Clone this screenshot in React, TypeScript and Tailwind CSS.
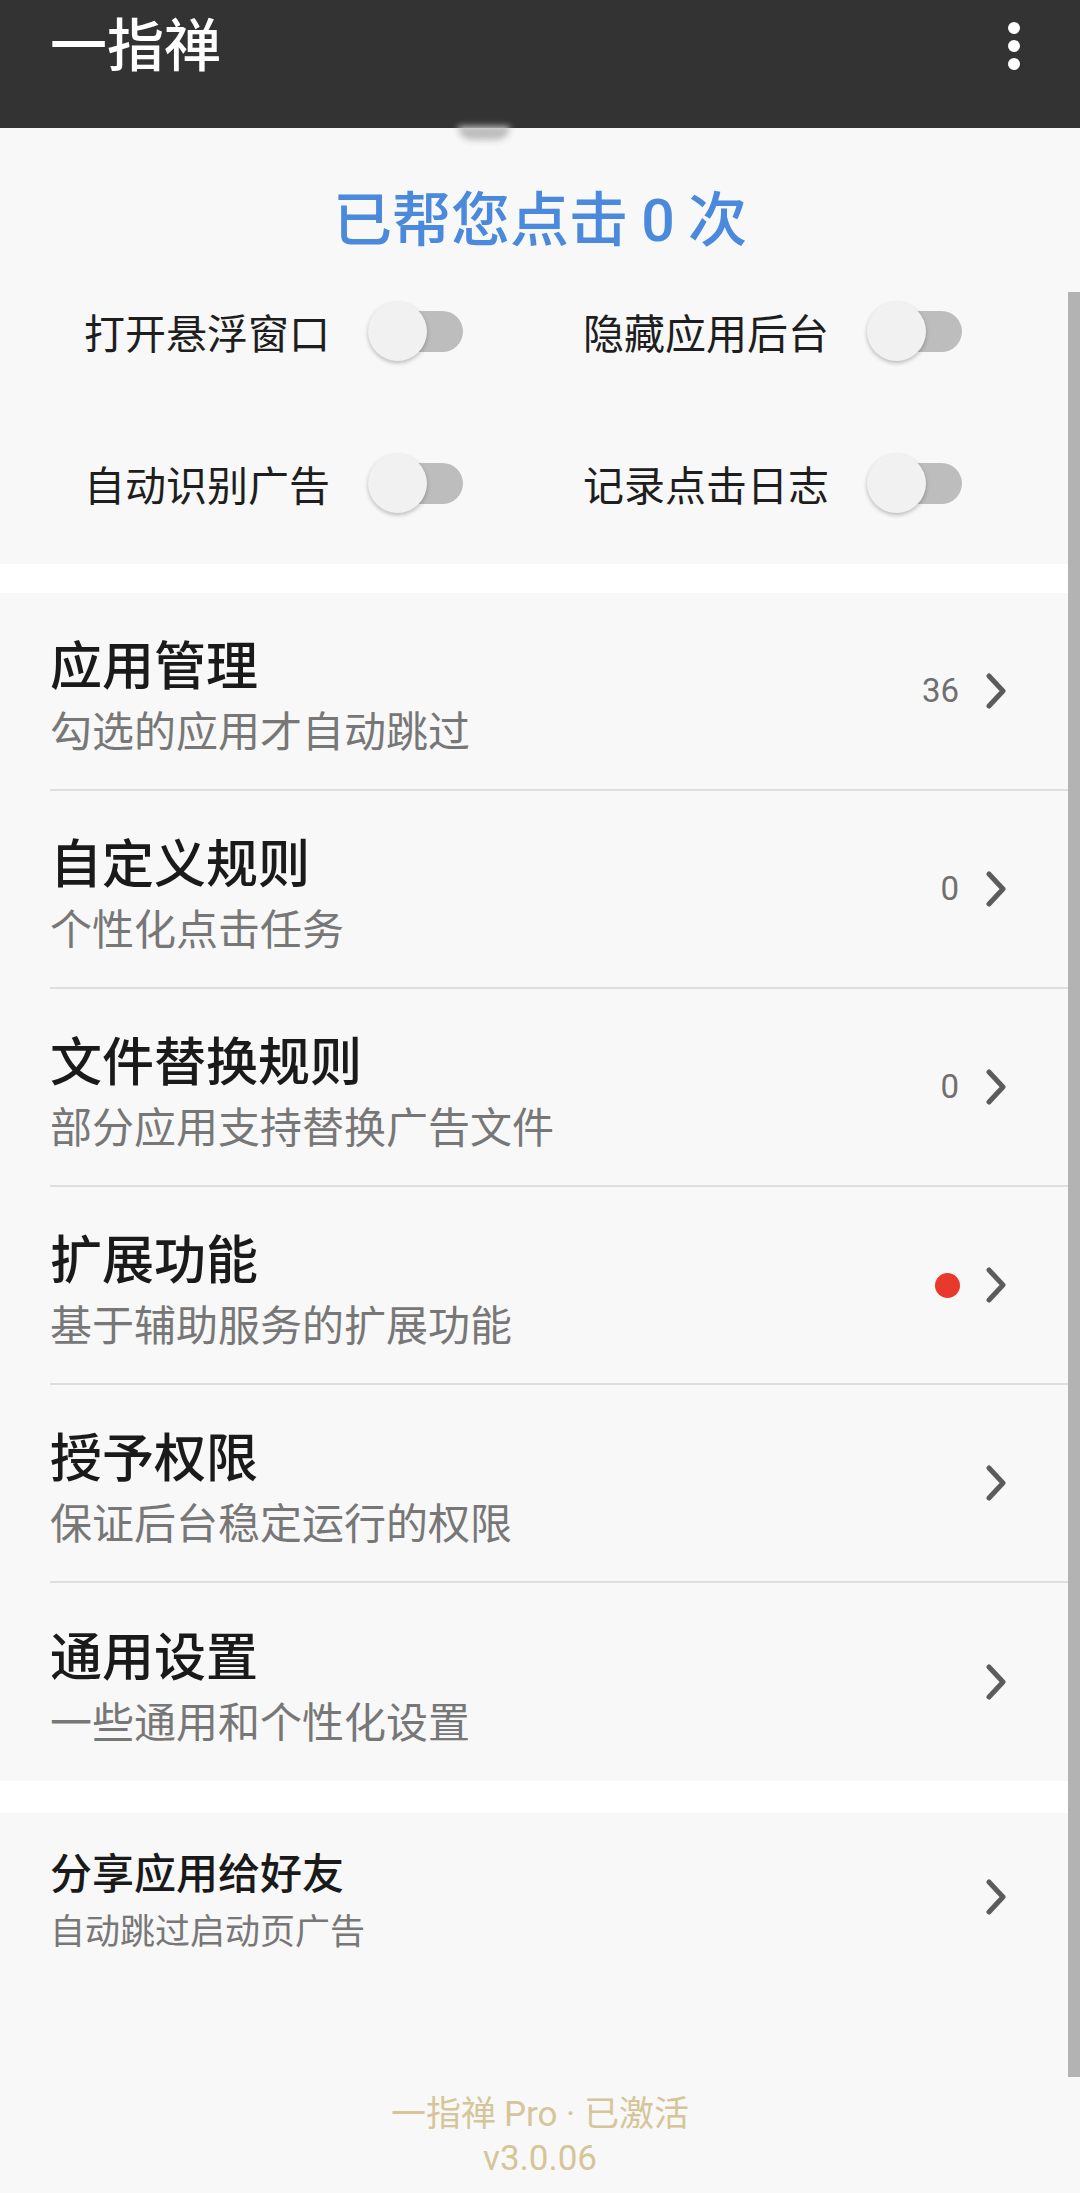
import React from "react";

type Item = {
  title: string;
  sub: string;
  count?: string;
  dot?: boolean;
};

const items: Item[] = [
  { title: "应用管理", sub: "勾选的应用才自动跳过", count: "36" },
  { title: "自定义规则", sub: "个性化点击任务", count: "0" },
  { title: "文件替换规则", sub: "部分应用支持替换广告文件", count: "0" },
  { title: "扩展功能", sub: "基于辅助服务的扩展功能", dot: true },
  { title: "授予权限", sub: "保证后台稳定运行的权限" },
  { title: "通用设置", sub: "一些通用和个性化设置" },
];

function Chevron() {
  return (
    <svg width="22" height="36" viewBox="0 0 22 36" className="shrink-0">
      <polyline
        points="4,3 18,18 4,33"
        fill="none"
        stroke="#5c5c5c"
        strokeWidth="5"
        strokeLinecap="round"
        strokeLinejoin="round"
      />
    </svg>
  );
}

function Switch() {
  return (
    <div className="relative w-[95px] h-[59px] shrink-0">
      <div className="absolute left-[7px] top-[9px] w-[88px] h-[41px] rounded-full bg-[#bdbdbd]" />
      <div className="absolute left-0 top-0 w-[59px] h-[59px] rounded-full bg-[#f1f1f1] shadow-[0_2px_4px_rgba(0,0,0,0.25)]" />
    </div>
  );
}

function Toggle({ label }: { label: string }) {
  return (
    <div className="flex items-center h-[60px]">
      <span className="w-[284px] text-[41px] leading-[48px] text-[#1e1e1e]">{label}</span>
      <Switch />
    </div>
  );
}

function ListRow({ item, last }: { item: Item; last: boolean }) {
  return (
    <div
      className={
        last
          ? "ml-[50px] h-[198px] flex items-center pr-[73px]"
          : "ml-[50px] h-[198px] flex items-center border-b-2 border-[#dedede] pr-[73px]"
      }
    >
      <div className="flex-1 flex flex-col pt-[4px]">
        <span className="text-[52px] leading-[60px] font-medium text-[#1a1a1a]">{item.title}</span>
        <span className="mt-[12px] text-[42px] leading-[48px] text-[#777777]">{item.sub}</span>
      </div>
      {item.count && (
        <span className="mr-[26px] font-['Roboto',sans-serif] text-[33px] text-[#707070]">
          {item.count}
        </span>
      )}
      {item.dot && <span className="mr-[25px] w-[25px] h-[25px] rounded-full bg-[#e8392d]" />}
      <Chevron />
    </div>
  );
}

export default function App() {
  return (
    <div className="relative w-[1080px] h-[2193px] overflow-hidden bg-[#f8f8f8] font-['Noto_Sans_CJK_SC','Noto_Sans',sans-serif] flex flex-col">
      {/* Top bar */}
      <div className="h-[128px] shrink-0 bg-[#333333] flex items-start justify-between pl-[50px] pr-[60px] pt-[8px]">
        <span className="text-[57px] leading-[66px] font-medium text-white">一指禅</span>
        <div className="flex flex-col gap-[6px] pt-[14px]">
          <span className="w-[12px] h-[12px] rounded-full bg-white" />
          <span className="w-[12px] h-[12px] rounded-full bg-white" />
          <span className="w-[12px] h-[12px] rounded-full bg-white" />
        </div>
      </div>
      <div className="absolute left-[458px] top-[126px] w-[52px] h-[14px] rounded-b-full bg-[#bdbdbd] blur-[3px]" />

      {/* Counter + toggles */}
      <div className="h-[436px] shrink-0 flex flex-col pt-[56px]">
        <div className="text-center text-[59px] leading-[64px] font-medium text-[#4a89dc]">
          已帮您点击 <span className="font-['Roboto',sans-serif]">0</span> 次
        </div>
        <div className="mt-[48px] pl-[84px] grid grid-cols-[499px_1fr] gap-y-[92px]">
          <Toggle label="打开悬浮窗口" />
          <Toggle label="隐藏应用后台" />
          <Toggle label="自动识别广告" />
          <Toggle label="记录点击日志" />
        </div>
      </div>

      <div className="h-[29px] shrink-0 bg-white" />

      {/* Main list */}
      <div className="shrink-0">
        {items.map((item, i) => (
          <ListRow key={item.title} item={item} last={i === items.length - 1} />
        ))}
      </div>

      <div className="h-[32px] shrink-0 bg-white" />

      {/* Share */}
      <div className="pl-[50px] pr-[73px] h-[168px] shrink-0 flex items-center">
        <div className="flex-1 flex flex-col pt-[3px]">
          <span className="text-[42px] leading-[48px] font-medium text-[#1a1a1a]">分享应用给好友</span>
          <span className="mt-[13px] text-[35px] leading-[42px] text-[#777777]">自动跳过启动页广告</span>
        </div>
        <Chevron />
      </div>

      {/* Footer */}
      <div className="mt-auto pb-[12px] flex flex-col items-center text-[35px] leading-[44px] text-[#d6c599]">
        <span>
          一指禅 <span className="font-['Roboto',sans-serif]">Pro · </span>已激活
        </span>
        <span className="font-['Roboto',sans-serif]">v3.0.06</span>
      </div>

      {/* Scrollbar */}
      <div className="absolute right-0 top-[292px] w-[12px] h-[1785px] bg-[#b3b3b3]" />
    </div>
  );
}
